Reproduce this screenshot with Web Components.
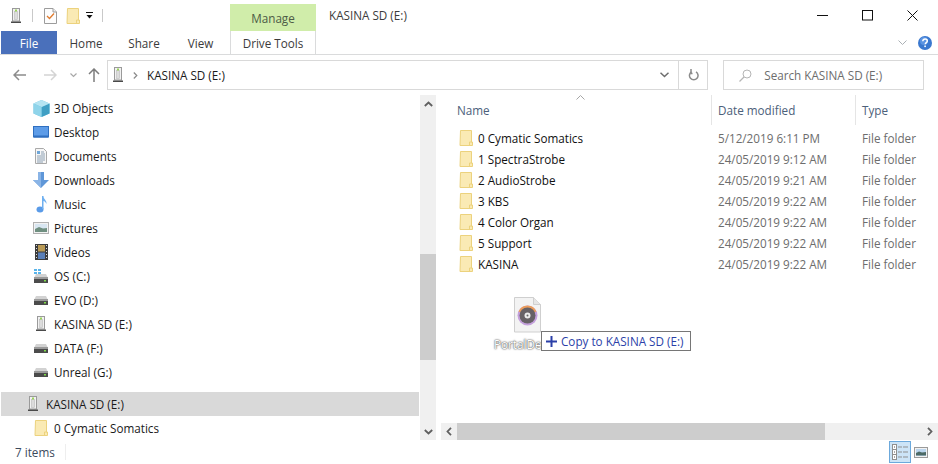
<!DOCTYPE html>
<html>
<head>
<meta charset="utf-8">
<title>KASINA SD (E:)</title>
<style>
  html, body { margin: 0; padding: 0; background: #fff; overflow: hidden; }
  body { font: 11.7px "Open Sans", "Noto Sans", sans-serif; color: #1a1a1a; }
</style>
</head>
<body>
<explorer-window></explorer-window>

<script>
const FOLDER = `<svg width="16" height="18" viewBox="0 0 16 18"><path d="M2.500 1.500h11v11.500h1v3.500h-12.500z" fill="#faeab4" stroke="#ecd27d"/><path d="M11.500 16v-3h2.500" fill="none" stroke="#ecd27d"/></svg>`;
const DRIVE = `<svg width="16" height="14" viewBox="0 0 16 14"><path d="M1.500 6l1.500-3h10l1.500 3z" fill="#d2d2d2"/><rect x="1" y="6" width="14" height="6" fill="#4b4b4b"/><rect x="1" y="6" width="14" height="2" fill="#9a9a9a"/><rect x="11" y="9" width="2" height="1.500" fill="#7fdc4a"/></svg>`;

const ICONS = {
  usb: `<svg width="16" height="16" viewBox="0 0 16 16"><rect x="4.500" y="0.500" width="7" height="12.500" fill="#f2f2f2" stroke="#9a9a9a"/><rect x="6.500" y="3.500" width="3" height="8" fill="#dcdcdc" stroke="#bdbdbd" stroke-width="0.600"/><rect x="7" y="1.500" width="2" height="2" fill="#9ad35a"/><rect x="3" y="13.500" width="10" height="1.500" fill="#4a4a4a"/></svg>`,
  check: `<svg width="13" height="16" viewBox="0 0 13 16"><path d="M0.500 0.500h8.500l3.500 3.500v11.500h-12z" fill="#fdfdfd" stroke="#9c9c9c"/><path d="M9 0.500v3.500h3.500" fill="#eee" stroke="#9c9c9c"/><path d="M3 8l2.500 2.500 4.500-5" fill="none" stroke="#e07b2e" stroke-width="1.300"/></svg>`,
  folder: FOLDER,
  qat: `<svg width="7" height="7" viewBox="0 0 7 7"><rect width="7" height="1" fill="#111"/><path d="M0.500 3h6l-3 3.500z" fill="#111"/></svg>`,
  min: `<svg width="11" height="11" viewBox="0 0 11 11"><rect y="5" width="11" height="1" fill="#111"/></svg>`,
  max: `<svg width="11" height="11" viewBox="0 0 11 11"><rect x="0.500" y="0.500" width="10" height="9.500" fill="none" stroke="#111"/></svg>`,
  close: `<svg width="11" height="11" viewBox="0 0 11 11"><path d="M0.500 0.500l10 10M10.500 0.500l-10 10" stroke="#111" stroke-width="1"/></svg>`,
  collapse: `<svg width="9" height="6" viewBox="0 0 9 6"><path d="M0.500 0.500l4 4 4-4" fill="none" stroke="#aab0b5"/></svg>`,
  help: `<svg width="14" height="14" viewBox="0 0 14 14"><circle cx="7" cy="7" r="7" fill="#3a78cf"/><circle cx="6" cy="5" r="4" fill="#5b94e2"/><path d="M4.800 5.300c0-1.500 1-2.200 2.300-2.200s2.200.8 2.200 1.900c0 1.600-2 1.600-2 3.200" fill="none" stroke="#fff" stroke-width="1.500"/><rect x="6.300" y="9.500" width="1.600" height="1.600" fill="#fff"/></svg>`,
  back: `<svg width="14" height="12" viewBox="0 0 14 12"><path d="M6 1l-5 5 5 5M1 6h12" fill="none" stroke="#8c8c8c" stroke-width="1.500"/></svg>`,
  forward: `<svg width="14" height="12" viewBox="0 0 14 12"><path d="M8 1l5 5-5 5M13 6h-12" fill="none" stroke="#d4d4d4" stroke-width="1.500"/></svg>`,
  recent: `<svg width="7" height="5" viewBox="0 0 7 5"><path d="M0.500 0.500l3 3 3-3" fill="none" stroke="#a8a8a8" stroke-width="1.200"/></svg>`,
  up: `<svg width="12" height="14" viewBox="0 0 12 14"><path d="M1 6l5-5 5 5M6 1v13" fill="none" stroke="#7d7d7d" stroke-width="1.500"/></svg>`,
  crumb: `<svg width="5" height="7" viewBox="0 0 5 7"><path d="M0.800 0.500l3 3-3 3" fill="none" stroke="#8a8a8a" stroke-width="1.200"/></svg>`,
  addrdown: `<svg width="9" height="6" viewBox="0 0 9 6"><path d="M0.500 0.800l4 3.700 4-3.700" fill="none" stroke="#6d6d6d" stroke-width="1.500"/></svg>`,
  refresh: `<svg width="11" height="12" viewBox="0 0 11 12"><path d="M3.500 2.800a4.300 4.300 0 1 0 4.500 0" fill="none" stroke="#8b8b8b" stroke-width="1.500"/><path d="M3 0v4.500h1.500" fill="none" stroke="#8b8b8b" stroke-width="1.500"/></svg>`,
  search: `<svg width="13" height="13" viewBox="0 0 13 13"><circle cx="8" cy="5" r="4" fill="none" stroke="#b5b5b5"/><path d="M5 8l-4.500 4.500" stroke="#b5b5b5" stroke-width="1.200"/></svg>`,
  cube: `<svg width="17" height="17" viewBox="0 0 17 17"><path d="M8.500 0l8 3.500v10l-8 3.500-8-3.500v-10z" fill="#6ec4e0"/><path d="M8.500 7l8-3.500v10l-8 3.500z" fill="#3f9fc4"/><path d="M8.500 7l-8-3.500 8-3.500 8 3.500z" fill="#b5e4f2"/><path d="M0.500 3.500l8 3.500v10l-8-3.500z" fill="#8fd4ea"/></svg>`,
  desktop: `<svg width="16" height="12" viewBox="0 0 16 12"><rect x="0.500" y="0.500" width="15" height="10.500" fill="#5d9ce8" stroke="#2f6fc0"/><rect x="1" y="9.500" width="14" height="2" fill="#2f6fc0"/></svg>`,
  docs: `<svg width="12" height="16" viewBox="0 0 12 16"><path d="M0.500 0.500h8l3 3v12h-11z" fill="#f6f6f6" stroke="#a9a9a9"/><path d="M2 3h3v3h-3z" fill="#6fa6d8"/><path d="M6 4h3M6 6h4M2 8h8M2 10h8M2 12h8M2 14h6" stroke="#8ca0b3" stroke-width="1"/></svg>`,
  downloads: `<svg width="16" height="16" viewBox="0 0 16 16"><path d="M5 0h6v8h5l-8 8-8-8h5z" fill="#5f97d8"/><path d="M5 0h3v16l-8-8h5z" fill="#8ab4e6"/></svg>`,
  music: `<svg width="11" height="17" viewBox="0 0 11 17"><ellipse cx="4" cy="13.500" rx="3.500" ry="3" fill="#5a9be8"/><path d="M6 13v-13h1.500c0 3.500 3.500 4 3 8-1-2-2-3-3-3v8z" fill="#6fb0f0"/></svg>`,
  pictures: `<svg width="16" height="12" viewBox="0 0 16 12"><rect x="0.500" y="0.500" width="15" height="11" fill="#f2f2f2" stroke="#b0b0b0"/><rect x="2" y="2" width="12" height="8" fill="#d8e6f1"/><path d="M2 7l4-2 4 1.500 4-.5v4h-12z" fill="#6f8f80"/></svg>`,
  videos: `<svg width="13" height="16" viewBox="0 0 13 16"><rect width="13" height="16" fill="#3c3c3c"/><rect x="3" y="1" width="7" height="6.500" fill="#b99a55"/><rect x="3" y="8.500" width="7" height="6.500" fill="#5a7fb8"/><path d="M1 1h1v1h-1zM1 4h1v1h-1zM1 7h1v1h-1zM1 10h1v1h-1zM1 13h1v1h-1zM11 1h1v1h-1zM11 4h1v1h-1zM11 7h1v1h-1zM11 10h1v1h-1zM11 13h1v1h-1z" fill="#ddd"/></svg>`,
  os: `<svg width="16" height="17" viewBox="0 0 16 17"><path d="M1 1h3v2h-3zM5 1h3v2h-3zM1 4h3v2h-3zM5 4h3v2h-3z" fill="#59b4ea"/><g transform="translate(0 3)">${DRIVE.replace(/<\/?svg[^>]*>/g, "")}</g></svg>`,
  drive: DRIVE,
  sbup: `<svg width="9" height="6" viewBox="0 0 9 6"><path d="M0.800 5l3.700-3.500 3.700 3.500" fill="none" stroke="#606060" stroke-width="1.800"/></svg>`,
  sbdown: `<svg width="9" height="6" viewBox="0 0 9 6"><path d="M0.800 1l3.700 3.500 3.700-3.500" fill="none" stroke="#606060" stroke-width="1.800"/></svg>`,
  sbleft: `<svg width="6" height="9" viewBox="0 0 6 9"><path d="M5 0.800l-3.500 3.700 3.500 3.700" fill="none" stroke="#606060" stroke-width="1.800"/></svg>`,
  sbright: `<svg width="6" height="9" viewBox="0 0 6 9"><path d="M1 0.800l3.500 3.700-3.500 3.700" fill="none" stroke="#606060" stroke-width="1.800"/></svg>`,
  sort: `<svg width="9" height="5" viewBox="0 0 9 5"><path d="M0.500 4.500l4-4 4 4" fill="none" stroke="#a6a6a6"/></svg>`,
  details: `<svg width="16" height="16" viewBox="0 0 16 16"><rect x="0.500" y="0.500" width="4" height="15" fill="#fff" stroke="#8f8f8f"/><path d="M0 5.500h5M0 10.500h5" stroke="#8f8f8f"/><path d="M2 2.500h1v1h-1zM2 7.500h1v1h-1zM2 12.500h1v1h-1z" fill="#555"/><path d="M6 3h4M11 3h5M6 8h4M11 8h5M6 13h4M11 13h5" stroke="#8f8f8f"/></svg>`,
  large: `<svg width="14" height="11" viewBox="0 0 14 11"><rect x="0.500" y="0.500" width="13" height="10" fill="#f2f2f2" stroke="#9a9a9a"/><rect x="2" y="2" width="10" height="7" fill="#bcd6ee"/><path d="M2 6l3-1.500 3 1 4-.5v3.500h-10z" fill="#4d6a66"/></svg>`,
  plus: `<svg width="11" height="11" viewBox="0 0 11 11"><path d="M5.500 0v11M0 5.500h11" stroke="#2b3fa8" stroke-width="2"/></svg>`,
  disc: `<svg width="27" height="36" viewBox="0 0 27 36"><path d="M0.500 0.500h19l7 7v27.500h-26z" fill="#f3f3f3" stroke="#cfcfcf"/><path d="M19.500 0.500v7h7" fill="#e6e6e6" stroke="#cfcfcf"/><circle cx="13.500" cy="18.500" r="10" fill="#c4a0dc"/><path d="M13.500 8.500a10 10 0 0 0-9 6l9 4 9-4a10 10 0 0 0-9-6z" fill="#ec9d5c"/><circle cx="13.500" cy="18.500" r="8" fill="#676266"/><circle cx="13.500" cy="18.500" r="3" fill="#ececec"/><circle cx="13.500" cy="18.500" r="1" fill="#666"/></svg>`
};

// one drawn icon, looked up by name
class ExIcon extends HTMLElement {
  connectedCallback() {
    if(!this.shadowRoot) {
      this.attachShadow({ mode: "open" });
      this.shadowRoot.innerHTML = `
      <style>
        :host { display: inline-flex; align-items: center; justify-content: center; flex: none; }
        svg { display: block; }
      </style>
      ${ICONS[this.getAttribute("name")] || ""}`;
    }
  }
}

class TitleBar extends HTMLElement {
  constructor() {
    super();
    this.attachShadow({ mode: "open" }).innerHTML = `
    <style>
      :host { display: flex; height: 31px; align-items: stretch; color: #3a3a3a; padding-right: 3px; }
      .qat { display: flex; align-items: center; width: 230px; padding-left: 9px; box-sizing: border-box; }
      .sep { width: 1px; height: 13px; background: #c9c9c9; }
      .manage { width: 86px; margin-top: 4px; padding-top: 1px; box-sizing: border-box; background: #d0edaa; display: flex; align-items: center; justify-content: center; color: #4d5b46; }
      .title { flex: 1; padding-left: 13px; line-height: 31px; color: #3c3c3c; }
      .ctrl { width: 45px; display: flex; align-items: center; justify-content: center; }
    </style>
    <div class="qat">
      <ex-icon name="usb" style="margin-left:-1px"></ex-icon>
      <span class="sep" style="margin-left:8px"></span>
      <ex-icon name="check" style="margin-left:11px"></ex-icon>
      <ex-icon name="folder" style="margin-left:8px"></ex-icon>
      <ex-icon name="qat" style="margin-left:5px"></ex-icon>
      <span class="sep" style="margin-left:9px"></span>
    </div>
    <div class="manage">Manage</div>
    <div class="title">KASINA SD (E:)</div>
    <div class="ctrl"><ex-icon name="min"></ex-icon></div>
    <div class="ctrl"><ex-icon name="max"></ex-icon></div>
    <div class="ctrl"><ex-icon name="close"></ex-icon></div>
    `;
  }
}

class RibbonTabs extends HTMLElement {
  constructor() {
    super();
    this.attachShadow({ mode: "open" }).innerHTML = `
    <style>
      :host { display: flex; height: 24px; box-sizing: border-box; border-bottom: 1px solid #dadbdc; color: #3b3b3b; padding-left: 1px; align-items: stretch; }
      div { display: flex; align-items: center; }
      .file { width: 56px; justify-content: center; background: #4a70bb; color: #fff; }
      .tab { width: 58px; justify-content: center; }
      .tools { width: 86px; box-sizing: border-box; justify-content: center; border-left: 1px solid #dadbdc; border-right: 1px solid #dadbdc; margin-left: 2px; }
      .right { margin-left: auto; gap: 11px; padding-right: 6px; }
    </style>
    <div class="file">File</div>
    <div class="tab">Home</div>
    <div class="tab">Share</div>
    <div class="tab" style="width:55px">View</div>
    <div class="tools">Drive Tools</div>
    <div class="right"><ex-icon name="collapse"></ex-icon><ex-icon name="help"></ex-icon></div>
    `;
  }
}

class AddressBar extends HTMLElement {
  constructor() {
    super();
    this.attachShadow({ mode: "open" }).innerHTML = `
    <style>
      :host { display: flex; height: 40px; padding: 5px 14px 5px 13px; box-sizing: border-box; align-items: stretch; }
      .nav { display: flex; align-items: center; width: 94px; flex: none; }
      .box { display: flex; align-items: center; box-sizing: border-box; border: 1px solid #d9d9d9; }
      .addr { width: 602px; color: #1a1a1a; }
      .addr .end { width: 28px; align-self: stretch; border-left: 1px solid #d9d9d9; display: flex; align-items: center; justify-content: center; }
      .search { width: 201px; margin-left: 15px; padding-left: 15px; color: #6d6d6d; }
    </style>
    <div class="nav">
      <ex-icon name="back"></ex-icon>
      <ex-icon name="forward" style="margin-left:16px"></ex-icon>
      <ex-icon name="recent" style="margin-left:13px"></ex-icon>
      <ex-icon name="up" style="margin-left:11px"></ex-icon>
    </div>
    <div class="box addr">
      <ex-icon name="usb" style="margin-left:2px"></ex-icon>
      <ex-icon name="crumb" style="margin-left:7px"></ex-icon>
      <span style="margin-left:9px;flex:1">KASINA SD (E:)</span>
      <ex-icon name="addrdown" style="margin-right:9px"></ex-icon>
      <div class="end"><ex-icon name="refresh"></ex-icon></div>
    </div>
    <div class="box search">
      <ex-icon name="search"></ex-icon>
      <span style="margin-left:12px">Search KASINA SD (E:)</span>
    </div>
    `;
  }
}

class NavItem extends HTMLElement {
  constructor() {
    super();
    this.attachShadow({ mode: "open" }).innerHTML = `
    <style>
      :host { display: flex; align-items: center; height: 24px; color: #1a1a1a; padding-left: 33px; }
      :host([current]) { background: #d9d9d9; padding-left: 24px; margin: 8px 1px 0 1px; }
      .i { width: 16px; display: flex; justify-content: center; margin-right: 5px; }
    </style>
    <span class="i"><slot name="icon"></slot></span><slot></slot>
    `;
  }
}

class ScrollBar extends HTMLElement {
  constructor() {
    super();
    let vertical = this.getAttribute("dir") !== "h";
    this.attachShadow({ mode: "open" }).innerHTML = `
    <style>
      :host { display: flex; flex: none; background: #f0f0f0; flex-direction: ${vertical ? "column" : "row"}; ${vertical ? "width: 16px;" : "height: 17px;"} }
      .btn { flex: none; ${vertical ? "height: 17px;" : "width: 16px;"} display: flex; align-items: center; justify-content: center; }
      .track { flex: 1; display: flex; flex-direction: ${vertical ? "column" : "row"}; }
      .thumb { background: #cdcdcd; }
    </style>
    <div class="btn"><ex-icon name="${vertical ? "sbup" : "sbleft"}"></ex-icon></div>
    <div class="track">
      <div style="flex:none;${vertical ? "height" : "width"}:${this.getAttribute("before")}px"></div>
      <div class="thumb" style="flex:none;${vertical ? "height" : "width"}:${this.getAttribute("size")}px"></div>
    </div>
    <div class="btn"><ex-icon name="${vertical ? "sbdown" : "sbright"}"></ex-icon></div>
    `;
  }
}

class NavPane extends HTMLElement {
  constructor() {
    super();
    this.attachShadow({ mode: "open" }).innerHTML = `
    <style>
      :host { display: flex; width: 436px; flex: none; }
      .items { width: 420px; display: flex; flex-direction: column; padding-top: 1px; box-sizing: border-box; }
    </style>
    <div class="items"><slot></slot></div>
    <scroll-bar dir="v" before="142" size="106"></scroll-bar>
    `;
  }
}

class FileRow extends HTMLElement {
  constructor() {
    super();
    this.attachShadow({ mode: "open" }).innerHTML = `
    <style>
      :host { display: grid; grid-template-columns: 260px 144px auto; height: 21px; line-height: 20px; align-items: start; padding-left: 17px; white-space: nowrap; }
      .n { display: flex; align-items: center; color: #111; gap: 4px; }
      .m { color: #6d6d6d; }
    </style>
    <div class="n"><ex-icon name="folder"></ex-icon>${this.getAttribute("name")}</div>
    <div class="m">${this.getAttribute("date")}</div>
    <div class="m">File folder</div>
    `;
  }
}

class FileList extends HTMLElement {
  constructor() {
    super();
    this.attachShadow({ mode: "open" }).innerHTML = `
    <style>
      :host { display: flex; flex-direction: column; flex: 1; min-width: 0; margin-left: 5px; position: relative; }
      .head { display: grid; grid-template-columns: 270px 144px auto; height: 28px; color: #4c607a; position: relative; flex: none; margin-bottom: 5px; }
      .head div { padding-left: 16px; line-height: 30px; }
      .head div + div { border-left: 1px solid #e5e5e5; padding-left: 6px; }
      .sort { position: absolute; left: 135px; top: 0; line-height: 0; }
      .rows { flex: 1; }
    </style>
    <div class="head"><div>Name</div><div>Date modified</div><div>Type</div></div>
    <ex-icon class="sort" name="sort"></ex-icon>
    <div class="rows"><slot></slot></div>
    <scroll-bar dir="h" before="0" size="368"></scroll-bar>
    `;
  }
}

class StatusBar extends HTMLElement {
  constructor() {
    super();
    this.attachShadow({ mode: "open" }).innerHTML = `
    <style>
      :host { display: flex; height: 24px; align-items: center; padding-left: 15px; color: #3c4a5c; }
      .sep { width: 1px; height: 16px; background: #eee; margin-left: 10px; }
      .views { margin-left: auto; display: flex; align-items: center; padding-right: 10px; gap: 3px; }
      .on { width: 22px; height: 22px; box-sizing: border-box; border: 1px solid #6ca9dc; background: #cce4f7; display: flex; align-items: center; justify-content: center; }
    </style>
    <span>7 items</span><span class="sep"></span>
    <div class="views"><div class="on"><ex-icon name="details"></ex-icon></div><ex-icon name="large"></ex-icon></div>
    `;
  }
}

// file being dragged over the list, floats above the rows
class DragGhost extends HTMLElement {
  constructor() {
    super();
    this.attachShadow({ mode: "open" }).innerHTML = `
    <style>
      :host { position: absolute; left: 494px; top: 297px; width: 198px; height: 56px; display: block; }
      .file { position: absolute; left: 20px; top: 0; }
      .label { position: absolute; left: 0; top: 39px; color: #fff; text-shadow: 0 0 2px #333, 0 0 1px #666; }
      .tip { position: absolute; left: 47px; top: 34px; box-sizing: border-box; height: 20px; width: 150px; background: #fff; border: 1px solid #767676; display: flex; align-items: center; padding-left: 4px; color: #2b3fa8; white-space: nowrap; }
      .tip ex-icon { margin-right: 4px; }
    </style>
    <ex-icon class="file" name="disc"></ex-icon>
    <span class="label">PortalDe</span>
    <div class="tip"><ex-icon name="plus"></ex-icon>Copy to KASINA SD (E:)</div>
    `;
  }
}

class ExplorerWindow extends HTMLElement {
  constructor() {
    super();
    const places = [
      ["cube", "3D Objects"], ["desktop", "Desktop"], ["docs", "Documents"], ["downloads", "Downloads"],
      ["music", "Music"], ["pictures", "Pictures"], ["videos", "Videos"], ["os", "OS (C:)"],
      ["drive", "EVO (D:)"], ["usb", "KASINA SD (E:)"], ["drive", "DATA (F:)"], ["drive", "Unreal (G:)"]
    ];
    const files = [
      ["0 Cymatic Somatics", "5/12/2019 6:11 PM"], ["1 SpectraStrobe", "24/05/2019 9:12 AM"],
      ["2 AudioStrobe", "24/05/2019 9:21 AM"], ["3 KBS", "24/05/2019 9:22 AM"],
      ["4 Color Organ", "24/05/2019 9:22 AM"], ["5 Support", "24/05/2019 9:22 AM"],
      ["KASINA", "24/05/2019 9:22 AM"]
    ];
    this.attachShadow({ mode: "open" }).innerHTML = `
    <style>
      :host { display: flex; flex-direction: column; width: 938px; height: 464px; position: relative; overflow: hidden; }
      main { display: flex; flex: 1; min-height: 0; }
    </style>
    <title-bar></title-bar>
    <ribbon-tabs></ribbon-tabs>
    <address-bar></address-bar>
    <main>
      <nav-pane>
        ${places.map(p => `<nav-item><ex-icon slot="icon" name="${p[0]}"></ex-icon>${p[1]}</nav-item>`).join("")}
        <nav-item current><ex-icon slot="icon" name="usb"></ex-icon>KASINA SD (E:)</nav-item>
        <nav-item><ex-icon slot="icon" name="folder"></ex-icon>0 Cymatic Somatics</nav-item>
      </nav-pane>
      <file-list>
        ${files.map(f => `<file-row name="${f[0]}" date="${f[1]}"></file-row>`).join("")}
      </file-list>
    </main>
    <status-bar></status-bar>
    <drag-ghost></drag-ghost>
    `;
  }
}

customElements.define("ex-icon", ExIcon);
customElements.define("title-bar", TitleBar);
customElements.define("ribbon-tabs", RibbonTabs);
customElements.define("address-bar", AddressBar);
customElements.define("nav-item", NavItem);
customElements.define("scroll-bar", ScrollBar);
customElements.define("nav-pane", NavPane);
customElements.define("file-row", FileRow);
customElements.define("file-list", FileList);
customElements.define("status-bar", StatusBar);
customElements.define("drag-ghost", DragGhost);
customElements.define("explorer-window", ExplorerWindow);
</script>
</body>
</html>
